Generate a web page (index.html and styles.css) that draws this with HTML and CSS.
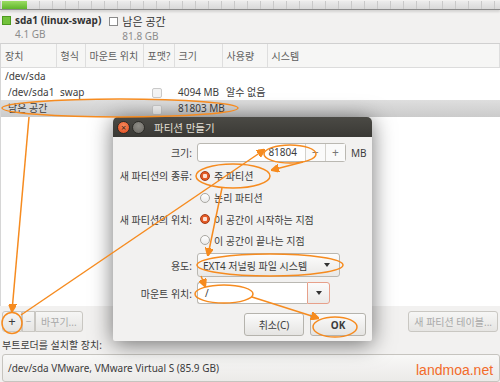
FILE: index.html
```html
<!DOCTYPE html>
<html lang="ko">
<head>
  <meta charset="UTF-8">
  <title>파티션 만들기</title>
  <link rel="stylesheet" href="styles.css">
</head>
<body>
  <div class="window">
    <div class="pbar"><div class="seg-swap"></div></div>

    <div class="legend">
      <div class="leg">
        <span class="swatch green"></span>
        <div><div class="leg-name">sda1 (linux-swap)</div><div class="leg-size">4.1 GB</div></div>
      </div>
      <div class="leg leg-free">
        <span class="swatch empty"></span>
        <div><div class="leg-name normal">남은 공간</div><div class="leg-size">81.8 GB</div></div>
      </div>
    </div>

    <div class="list">
      <table>
        <colgroup>
          <col style="width:55px"><col style="width:29px"><col style="width:58px"><col style="width:31px"><col style="width:48px"><col style="width:45px"><col>
        </colgroup>
        <tr><th>장치</th><th>형식</th><th>마운트 위치</th><th>포맷?</th><th>크기</th><th>사용량</th><th>시스템</th></tr>
        <tr><td>/dev/sda</td><td></td><td></td><td></td><td></td><td></td><td></td></tr>
        <tr><td class="indent">/dev/sda1</td><td>swap</td><td></td><td><span class="chk"></span></td><td>4094 MB</td><td>알수 없음</td><td></td></tr>
        <tr class="sel"><td class="indent">남은 공간</td><td></td><td></td><td><span class="chk"></span></td><td>81803 MB</td><td></td><td></td></tr>
      </table>
    </div>

    <div class="toolbar">
      <div class="btngroup">
        <button class="tb">+</button><button class="tb dis">−</button><button class="tb dis">바꾸기...</button>
      </div>
      <button class="tb dis">새 파티션 테이블...</button>
    </div>

    <div class="bootlabel">부트로더를 설치할 장치:</div>
    <div class="bootcombo">/dev/sda VMware, VMware Virtual S (85.9 GB)</div>
  </div>

  <div class="dialog">
    <div class="titlebar">
      <span class="wbtn close">×</span><span class="wbtn min"></span>
      <span class="title">파티션 만들기</span>
    </div>
    <div class="dbody">
      <div class="form">
        <label>크기:</label>
        <div class="ctl">
          <div class="spin">
            <span class="spin-entry">81804</span><span class="spin-btn">−</span><span class="spin-btn">+</span>
          </div>
          <span class="unit">MB</span>
        </div>

        <label>새 파티션의 종류:</label>
        <div class="ctl"><span class="radio on"></span>주 파티션</div>
        <span></span>
        <div class="ctl"><span class="radio"></span>논리 파티션</div>

        <label>새 파티션의 위치:</label>
        <div class="ctl"><span class="radio on"></span>이 공간이 시작하는 지점</div>
        <span></span>
        <div class="ctl"><span class="radio"></span>이 공간이 끝나는 지점</div>

        <label>용도:</label>
        <div class="ctl"><div class="combo">EXT4 저널링 파일 시스템<span class="arrow"></span></div></div>

        <label>마운트 위치:</label>
        <div class="ctl"><div class="mount"><span class="mount-entry">/</span><span class="mount-btn"><span class="arrow"></span></span></div></div>
      </div>
      <div class="actions">
        <button class="dbtn">취소(C)</button><button class="dbtn ok">OK</button>
      </div>
    </div>
  </div>

  <svg class="marks" width="500" height="382" viewBox="0 0 500 382">
    <defs>
      <marker id="ah" markerWidth="8" markerHeight="8" refX="7" refY="4" orient="auto" markerUnits="userSpaceOnUse">
        <path d="M0,0 L8,4 L0,8 Z" fill="#f68b1f"/>
      </marker>
    </defs>
    <ellipse cx="120" cy="108" rx="118" ry="9"/>
    <ellipse cx="12" cy="323" rx="10" ry="10.5"/>
    <ellipse cx="290" cy="154" rx="26" ry="9"/>
    <ellipse cx="233" cy="176" rx="37" ry="12"/>
    <ellipse cx="270" cy="265" rx="73" ry="11"/>
    <ellipse cx="224" cy="294" rx="29" ry="9"/>
    <ellipse cx="335" cy="327" rx="22" ry="10"/>
    <line x1="29" y1="117" x2="12" y2="311" marker-end="url(#ah)"/>
    <line x1="21" y1="315" x2="264" y2="150" marker-end="url(#ah)"/>
    <line x1="303" y1="162" x2="272" y2="170" marker-end="url(#ah)"/>
    <line x1="222" y1="188" x2="208" y2="255" marker-end="url(#ah)"/>
    <line x1="201" y1="276" x2="205" y2="286" marker-end="url(#ah)"/>
    <line x1="252" y1="297" x2="318" y2="318" marker-end="url(#ah)"/>
  </svg>

  <div class="watermark">landmoa.net</div>
</body>
</html>
```

FILE: styles.css
```css
body { margin: 0; width: 500px; height: 382px; overflow: hidden; position: relative; background: #f2f1f0; font-family: "Noto Sans", "Noto Sans CJK KR", sans-serif; font-size: 10px; color: #3c3c3c; }
button { font: inherit; }

.window { height: 382px; display: flex; flex-direction: column; }

.pbar { margin-top: 1px; height: 8px; border-bottom: 1px solid #8a8a8a; padding-left: 2px; box-shadow: 0 2px 2px rgba(0,0,0,0.12);
  background: repeating-linear-gradient(90deg, #c9c9c9 0 1px, transparent 1px 13px), linear-gradient(#ececec, #d9d9d9); }
.seg-swap { width: 25px; height: 8px; background: linear-gradient(#9bdc63, #5fb52a); }

.legend { display: flex; height: 33px; padding: 4px 0 0 2px; box-sizing: border-box; }
.leg { display: flex; align-items: flex-start; gap: 4px; }
.leg-free { margin-left: 8px; }
.swatch { width: 7px; height: 7px; margin-top: 2px; flex: none; }
.swatch.green { background: #73c23b; border: 1px solid #4e9a20; }
.swatch.empty { background: #fff; border: 1px solid #8a8a8a; margin-top: 3px; }
.leg-name { font-weight: bold; line-height: 13px; color: #333; }
.leg-name.normal { font-weight: normal; font-size: 11px; line-height: 15px; }
.leg-size { color: #8c8c8c; line-height: 12px; margin-top: 1px; }

.list { height: 264px; background: #fff; border-top: 1px solid #d0d0d0; border-left: 1px solid #d6d6d6; }
table { width: 100%; border-collapse: collapse; table-layout: fixed; }
th { height: 23px; background: #f6f6f5; border-bottom: 1px solid #dcdcdc; border-right: 1px solid #dedede; font-weight: normal; color: #5e5e5e; text-align: left; padding: 0 0 0 4px; white-space: nowrap; overflow: hidden; }
td { height: 16px; line-height: 16px; padding: 0 0 0 4px; white-space: nowrap; }
td.indent { padding-left: 7px; }
tr.sel td { background: linear-gradient(#dedede, #cbcbcb); height: 17px; }
.chk { display: inline-block; width: 8px; height: 8px; border: 1px solid #c9c9c9; border-radius: 2px; background: #f3f3f3; vertical-align: middle; margin-left: 5px; }

.toolbar { display: flex; justify-content: space-between; padding: 5px 2px 0 2px; height: 31px; box-sizing: border-box; }
.btngroup { display: flex; }
.tb { height: 21px; padding: 0 5px; border: 1px solid #c9c7c2; border-radius: 3px; background: linear-gradient(#f6f6f5, #e6e5e3); color: #3c3c3c; margin: 0; }
.btngroup .tb { border-radius: 0; }
.btngroup .tb:first-child { border-radius: 3px 0 0 3px; width: 20px; font-size: 13px; line-height: 1; padding: 0; }
.btngroup .tb:nth-child(2) { width: 13px; padding: 0; }
.btngroup .tb:last-child { border-radius: 0 3px 3px 0; }
.tb.dis { color: #a8a8a8; }

.bootlabel { padding: 1px 0 0 2px; height: 17px; }
.bootcombo { margin: 0 0 0 2px; height: 28px; border: 1px solid #c6c4bf; border-radius: 3px; background: linear-gradient(#f8f8f7, #ebeae8); padding: 6px 0 0 5px; box-sizing: border-box; }

.dialog { position: absolute; left: 113px; top: 117px; width: 259px; height: 224px; background: #f2f1f0; border-radius: 5px 5px 2px 2px; box-shadow: 0 3px 22px rgba(0,0,0,0.55); display: flex; flex-direction: column; }
.titlebar { height: 20px; background: linear-gradient(#4b4a45, #3a3935); border-radius: 5px 5px 0 0; display: flex; align-items: center; padding-left: 4px; }
.wbtn { width: 11px; height: 11px; border-radius: 50%; margin-right: 2px; display: inline-flex; align-items: center; justify-content: center; font-size: 9px; line-height: 1; color: #3a2a20; }
.wbtn.close { background: radial-gradient(circle at 50% 35%, #f88a5c, #e0481b); border: 1px solid #2d2c28; }
.wbtn.min { background: radial-gradient(circle at 50% 35%, #8f8d87, #67655f); border: 1px solid #2d2c28; }
.title { color: #e4e0d7; margin-left: 7px; font-size: 10.5px; }

.dbody { flex: 1; padding: 6px 0 0 0; display: flex; flex-direction: column; }
.form { display: grid; grid-template-columns: 79px 1fr; column-gap: 5px; grid-template-rows: 19px 17px 17px 16px 16px 24px 22px; row-gap: 5px; align-items: center; }
.form label { text-align: right; color: #3c3c3c; white-space: nowrap; }
.ctl { display: flex; align-items: center; white-space: nowrap; }

.spin { display: flex; height: 19px; border: 1px solid #bab8b2; border-radius: 3px; background: #fff; box-sizing: border-box; width: 149px; }
.spin-entry { flex: 1; text-align: right; padding-right: 8px; line-height: 17px; }
.spin-btn { width: 19px; border-left: 1px solid #d3d1cc; text-align: center; line-height: 17px; color: #777; font-size: 12px; background: #fafafa; }
.unit { margin-left: 5px; }

.radio { width: 10px; height: 10px; border-radius: 50%; border: 1px solid #a9a7a1; background: linear-gradient(#fff, #eaeaea); margin: 0 4px 0 3px; box-sizing: border-box; flex: none; }
.radio.on { border-color: #a43a14; background: radial-gradient(circle, #fbe0d4 0 2px, #e35a26 2.5px); }

.combo { width: 143px; height: 24px; box-sizing: border-box; border: 1px solid #b9b7b1; border-radius: 3px; background: linear-gradient(#fdfdfd, #e9e8e6); display: flex; align-items: center; justify-content: space-between; padding: 0 9px 0 5px; }
.arrow { width: 0; height: 0; border-left: 3.5px solid transparent; border-right: 3.5px solid transparent; border-top: 4px solid #333; }
.mount { display: flex; height: 22px; width: 133px; box-sizing: border-box; }
.mount-entry { width: 110px; background: #fff; border: 1px solid #bab8b2; border-right: none; border-radius: 3px 0 0 3px; padding-left: 7px; line-height: 20px; box-sizing: border-box; }
.mount-btn { flex: 1; border: 1px solid #e7a08a; border-radius: 0 3px 3px 0; background: linear-gradient(#fbfbfb, #ebeae8); display: flex; align-items: center; justify-content: center; }

.actions { display: flex; justify-content: flex-end; gap: 6px; padding: 9px 6px 0 0; }
.dbtn { height: 23px; width: 60px; border: 1px solid #b5b3ad; border-radius: 3px; background: linear-gradient(#fbfbfb, #e5e4e2); color: #3c3c3c; padding: 0; }
.dbtn.ok { width: 56px; font-weight: bold; }

.marks { position: absolute; left: 0; top: 0; pointer-events: none; fill: none; stroke: #f68b1f; stroke-width: 1.5; }
.watermark { position: absolute; left: 416px; top: 362px; font-family: "Liberation Sans", sans-serif; font-size: 14px; color: #f26b2a; }
```
